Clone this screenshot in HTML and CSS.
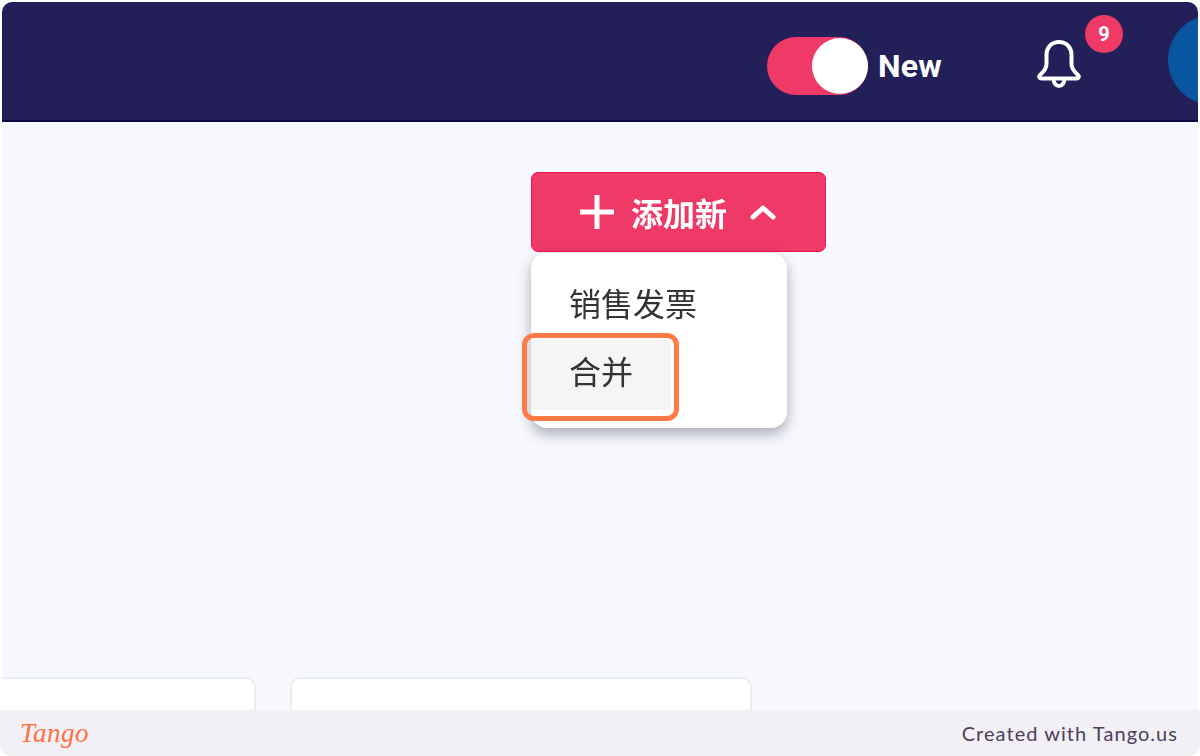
FILE: index.html
```html
<!DOCTYPE html>
<html lang="zh">
<head>
    <meta charset="UTF-8">
    <meta name="viewport" content="width=device-width, initial-scale=1.0">
    <title>添加新</title>
    <link rel="stylesheet" href="styles.css">
</head>
<body>
    <div class="shot">
        <div class="app">
            <header class="topbar">
                <div class="toggle"><span class="knob"></span></div>
                <span class="toggle-label">New</span>
                <div class="bell">
                    <svg width="46" height="50" viewBox="0 0 46 50" fill="none" stroke="#fff" stroke-width="4" stroke-linecap="round" stroke-linejoin="round">
                        <path d="M23 3c-8 0-12.500 6-12.500 13v9c0 5-3 8-6.500 11-1.500 1.500-.5 3.500 1.500 3.500h35c2 0 3-2 1.500-3.500-3.500-3-6.500-6-6.500-11v-9C35.500 9 31 3 23 3z"/>
                        <path d="M17.500 40c0 4 2.500 7 5.500 7s5.500-3 5.500-7"/>
                    </svg>
                    <span class="badge">9</span>
                </div>
                <div class="avatar"></div>
            </header>
            <main class="content">
                <div class="actions">
                    <button class="add-btn">
                        <svg width="36" height="36" viewBox="0 0 36 36" fill="none" stroke="#fff" stroke-width="5"><path d="M18 1v34M1 18h34"/></svg>
                        <span>添加新</span>
                        <svg class="chevron" width="26" height="16" viewBox="0 0 26 16" fill="none" stroke="#fff" stroke-width="5" stroke-linecap="round" stroke-linejoin="round"><path d="M3 13l10-9 10 9"/></svg>
                    </button>
                    <div class="menu">
                        <div class="menu-item">销售发票</div>
                        <div class="menu-item active">合并</div>
                    </div>
                </div>
                <div class="cards">
                    <div class="card card-small"></div>
                    <div class="card card-wide"></div>
                </div>
            </main>
        </div>
        <div class="highlight"></div>
        <footer class="footer">
            <span class="logo">Tango</span>
            <span class="credit">Created with Tango.us</span>
        </footer>
    </div>
</body>
</html>
```

FILE: styles.css
```css
body {
    margin: 0;
    background-color: #fff;
    font-family: "Roboto", "Noto Sans CJK SC", sans-serif;
}
.shot {
    position: relative;
    display: flex;
    flex-direction: column;
    width: 1200px;
    height: 756px;
    overflow: hidden;
    background-color: #fff;
}
.app {
    flex: 1;
    display: flex;
    flex-direction: column;
    min-height: 0;
    margin: 2px 2px 0;
    overflow: hidden;
    border-radius: 10px 10px 0 0;
    filter: blur(0.7px);
}
.topbar {
    flex: none;
    display: flex;
    align-items: center;
    height: 118px;
    padding-left: 765px;
    background-color: #231f58;
    border-bottom: 2px solid #0f0b47;
}
.toggle {
    flex: none;
    position: relative;
    width: 101px;
    height: 58px;
    margin-top: 9px;
    border-radius: 29px;
    background-color: #ef3a67;
}
.knob {
    position: absolute;
    top: 1px;
    right: 0;
    width: 56px;
    height: 56px;
    border-radius: 50%;
    background-color: #fff;
}
.toggle-label {
    flex: none;
    width: 64px;
    margin: 9px 0 0 10px;
    color: #fff;
    font-size: 32px;
    font-weight: 700;
    letter-spacing: 0.2px;
}
.bell {
    flex: none;
    position: relative;
    width: 46px;
    height: 50px;
    margin: 6px 0 0 94px;
}
.badge {
    position: absolute;
    top: -24px;
    left: 49px;
    width: 38px;
    height: 38px;
    border-radius: 50%;
    background-color: #ef3a67;
    color: #fff;
    font-size: 20px;
    font-weight: 700;
    line-height: 38px;
    text-align: center;
}
.avatar {
    flex: none;
    width: 90px;
    height: 90px;
    margin: 0 0 2px 86px;
    border-radius: 50%;
    background-color: #0a55a0;
}
.content {
    flex: 1;
    display: flex;
    flex-direction: column;
    min-height: 0;
    overflow: hidden;
    background-color: #f8f9fe;
}
.actions {
    position: relative;
    width: 295px;
    margin: 50px 0 0 529px;
}
.add-btn {
    display: flex;
    align-items: center;
    width: 295px;
    height: 80px;
    padding: 0 0 0 47px;
    border: 1px solid #f0104f;
    border-radius: 7px;
    background-color: #ef3a67;
    color: #fff;
    font-family: "Roboto", "Noto Sans CJK SC", sans-serif;
    font-size: 32px;
    font-weight: 700;
}
.add-btn span {
    margin-left: 16px;
}
.chevron {
    margin-left: 23px;
}
.menu {
    position: absolute;
    top: 81px;
    left: 0;
    width: 256px;
    height: 175px;
    padding-top: 17px;
    box-sizing: border-box;
    border-radius: 16px;
    background-color: #fff;
    box-shadow: 0 6px 14px rgba(40, 45, 70, 0.38);
}
.menu-item {
    width: 140px;
    height: 70px;
    padding-left: 38px;
    box-sizing: border-box;
    color: #333;
    font-size: 32px;
    line-height: 70px;
    white-space: nowrap;
}
.menu-item.active {
    background-color: #f5f5f5;
    line-height: 66px;
}
.cards {
    flex: none;
    display: flex;
    gap: 34px;
    height: 33px;
    margin-top: auto;
    margin-left: -8px;
}
.card {
    height: 80px;
    box-sizing: border-box;
    border: 2px solid #e8ecf5;
    border-radius: 10px;
    background-color: #fff;
}
.card-small {
    width: 262px;
}
.card-wide {
    width: 462px;
}
.highlight {
    position: absolute;
    top: 333px;
    left: 522px;
    width: 157px;
    height: 88px;
    box-sizing: border-box;
    border: 5px solid #ff7a45;
    border-radius: 12px;
}
.footer {
    flex: none;
    display: flex;
    align-items: center;
    justify-content: space-between;
    height: 46px;
    padding: 0 22px 0 20px;
    border-radius: 0 0 10px 10px;
    background-color: #f3f0f5;
}
.logo {
    color: #ff7043;
    font-family: "Liberation Serif", serif;
    font-size: 27px;
    font-style: italic;
    letter-spacing: 0.5px;
}
.credit {
    color: #4a3f5c;
    font-family: "Lato", sans-serif;
    font-size: 20px;
    letter-spacing: 1.05px;
}
```
